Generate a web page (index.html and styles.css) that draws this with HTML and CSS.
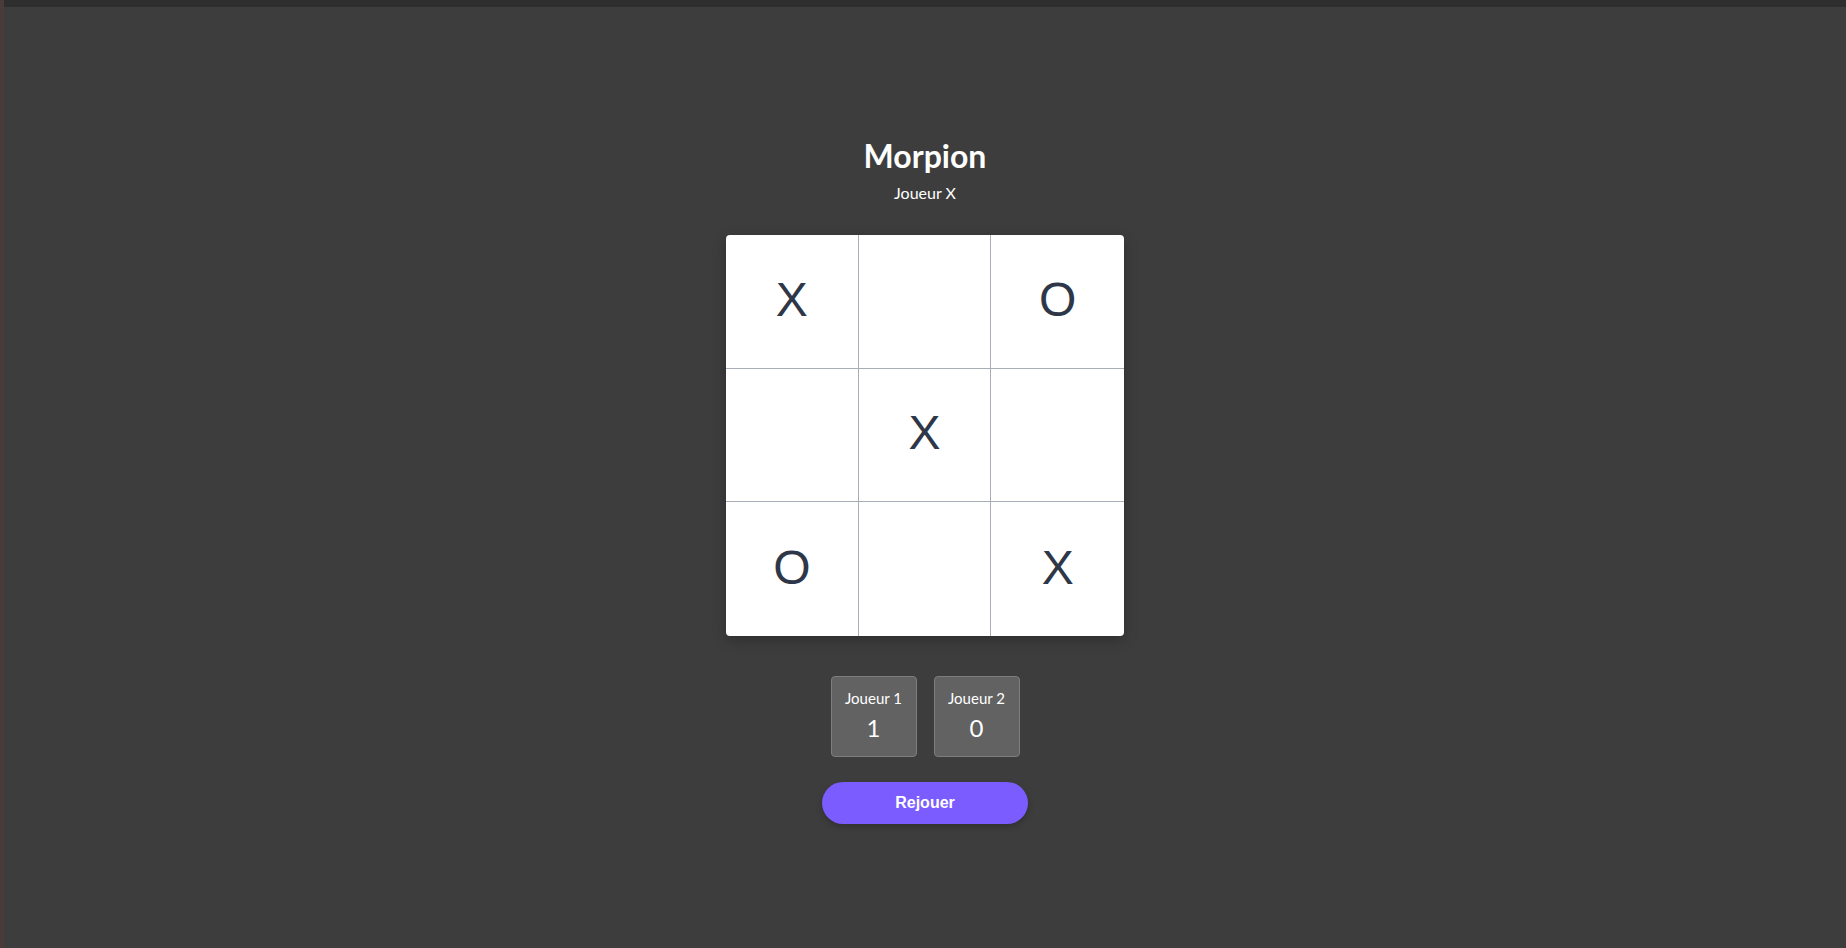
FILE: index.html
```html
<!DOCTYPE html>
<html lang="fr">
<head>
<meta charset="utf-8">
<title>Morpion</title>
<link rel="stylesheet" href="styles.css">
</head>
<body>
<div class="topbar"></div>
<main class="game">
  <h1 class="title">Morpion</h1>
  <p class="status">Joueur X</p>
  <div class="board">
    <div class="cell">X</div>
    <div class="cell"></div>
    <div class="cell">O</div>
    <div class="cell"></div>
    <div class="cell">X</div>
    <div class="cell"></div>
    <div class="cell">O</div>
    <div class="cell"></div>
    <div class="cell">X</div>
  </div>
  <div class="scores">
    <div class="score">
      <div class="score-label">Joueur 1</div>
      <div class="score-value">1</div>
    </div>
    <div class="score">
      <div class="score-label">Joueur 2</div>
      <div class="score-value">0</div>
    </div>
  </div>
  <button class="replay">Rejouer</button>
</main>
</body>
</html>
```

FILE: styles.css
```css
* { box-sizing: border-box; }
html, body { margin: 0; height: 100%; }
body {
  background: #3d3d3d;
  border-left: 4px solid #4a3b3b;
  font-family: Lato, "Open Sans", sans-serif;
  color: #ffffff;
  overflow: hidden;
}
.topbar {
  height: 7px;
  background: #2e2e2e;
}
.game {
  display: flex;
  flex-direction: column;
  align-items: center;
  padding-top: 129px;
}
.title {
  margin: 0 0 8px;
  font-size: 32px;
  font-weight: 700;
  line-height: normal;
}
.status {
  margin: 0 0 33px;
  font-size: 16px;
  line-height: normal;
}
.board {
  width: 398px;
  height: 401px;
  display: grid;
  grid-template-columns: repeat(3, 1fr);
  grid-template-rows: repeat(3, 1fr);
  background: #ffffff;
  border-radius: 4px;
  box-shadow: 0 4px 14px rgba(0, 0, 0, 0.25);
  overflow: hidden;
}
.cell {
  display: flex;
  align-items: center;
  justify-content: center;
  padding-bottom: 4px;
  font-family: "Liberation Sans", Arial, sans-serif;
  font-size: 48px;
  color: #2d3748;
  border-right: 1px solid #a8aeb8;
  border-bottom: 1px solid #a8aeb8;
}
.cell:nth-child(3n) { border-right: none; }
.cell:nth-child(n+7) { border-bottom: none; }
.scores {
  display: flex;
  gap: 17px;
  margin-top: 40px;
}
.score {
  width: 86px;
  height: 81px;
  padding-top: 12px;
  background: #626262;
  border: 1px solid #7d7d7d;
  border-radius: 4px;
  text-align: center;
}
.score-label {
  font-size: 15px;
  line-height: 18px;
}
.score-value {
  margin-top: 6px;
  font-size: 24px;
  line-height: 29px;
}
.replay {
  margin-top: 25px;
  width: 206px;
  height: 42px;
  border: none;
  border-radius: 21px;
  background: #7b5cff;
  color: #ffffff;
  font-family: "Liberation Sans", Arial, sans-serif;
  font-weight: 700;
  font-size: 16px;
  box-shadow: 0 3px 6px rgba(0, 0, 0, 0.2);
  cursor: pointer;
}
```
